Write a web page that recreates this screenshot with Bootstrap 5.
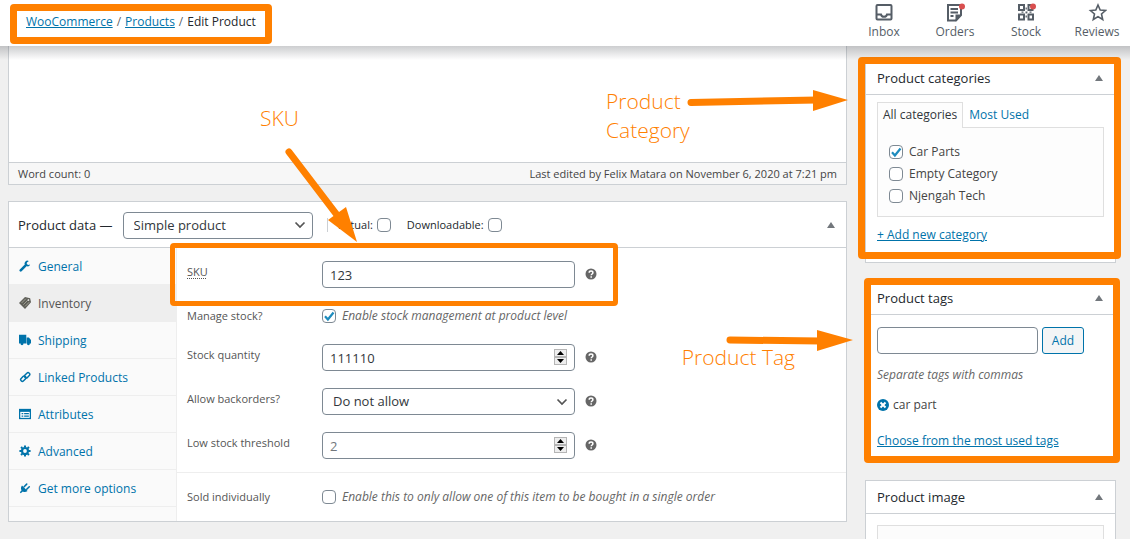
<!DOCTYPE html>
<html lang="en">
<head>
<meta charset="utf-8">
<meta name="viewport" content="width=device-width, initial-scale=1">
<title>Edit Product</title>
<link href="https://cdn.jsdelivr.net/npm/bootstrap@5.3.0/dist/css/bootstrap.min.css" rel="stylesheet">
<style>
:root { --wp-blue: #0073aa; --line: #ccd0d4; --field: #7e8993; --mark: #ff8000; }
body { font: 400 12px/18px "Open Sans", "Noto Sans", sans-serif; color: #444; background: #f0f0f0; }
a { color: var(--wp-blue); }
button { font: inherit; }
.topbar { height: 46px; z-index: 5; }
.topbar::after { content: ""; position: absolute; left: 0; right: 0; top: 100%; height: 14px; background: linear-gradient(rgba(60,64,72,.26), rgba(60,64,72,0)); pointer-events: none; }
.crumbs { padding: 10px 16px 15px; left: 10px; top: 4px; }
.crumbs .breadcrumb { --bs-breadcrumb-item-padding-x: 4px; --bs-breadcrumb-margin-bottom: 0; --bs-breadcrumb-font-size: 12px; line-height: 15px; }
.crumbs .active { color: #23282d; }
.activity { gap: 15px; padding-right: 5px; }
.activity button { width: 56px; color: #555d66; line-height: 16px; padding: 0; border: 0; background: none; display: flex; flex-direction: column; align-items: center; padding-top: 2px; }
.page { gap: 18px; padding: 0 14px 0 8px; }
.panel { background: #fff; border: 1px solid var(--line); }
.panel-title { font-size: 13px; line-height: 20px; font-weight: 500; color: #23282d; margin: 0; }
.caret { border: 4px solid transparent; border-top: 0; border-bottom: 6px solid #72777c; padding: 0; background: none; }
.editor-body { height: 116px; border: 0; resize: none; display: block; outline: 0; }
.status { height: 22px; background: #f7f7f7; border-top: 1px solid var(--line); padding: 0 9px; font-size: 11px; }
.data-head { height: 46px; padding: 0 11px 0 9px; border-bottom: 1px solid var(--line); color: #23282d; }
.field, .pick { height: 27px; width: 253px; border: 1px solid var(--field); border-radius: 4px; padding: 0 7px; font-size: 13px; line-height: 25px; color: #32373c; background-color: #fff; }
.field::placeholder { color: #72777c; opacity: 1; }
.field::-webkit-inner-spin-button { -webkit-appearance: none; }
.pick { appearance: none; padding: 0 24px 0 10px; background: #fff url("data:image/svg+xml,%3Csvg xmlns='http://www.w3.org/2000/svg' viewBox='0 0 12 8'%3E%3Cpath d='M1.5 1.5 6 6l4.500-4.500' fill='none' stroke='%23555' stroke-width='1.700'/%3E%3C/svg%3E") no-repeat right 6px center / 12px 8px; }
.type-pick { width: 190px; margin: 1px 14px 0 10px; }
.form-check-input { width: 14px; height: 14px; margin: 0; border: 1px solid var(--field); flex: none; }
.form-check-input[type=checkbox] { border-radius: 4px; }
.form-check-input:checked { background-color: #fff; border-color: var(--field); background-size: 12px 12px; background-image: url("data:image/svg+xml,%3Csvg xmlns='http://www.w3.org/2000/svg' viewBox='0 0 12 12'%3E%3Cpath d='m2 6.200 2.900 3.300L10.500 2.500' fill='none' stroke='%231e8cbe' stroke-width='2.200'/%3E%3C/svg%3E"); }
.type-opts { border-left: 1px solid var(--line); line-height: 14px; padding-left: 9px; font-size: 11px; }
.tabs { width: 168px; background: #fafafa; border-right: 1px solid #eee; padding-bottom: 14px; }
.tabs a { height: 37px; padding: 2px 10px 0; gap: 7px; border-bottom: 1px solid #eee; text-decoration: none; }
.tabs a.active { background: #eee; color: #555; }
.tabs svg { width: 12px; height: 12px; margin-bottom: 3px; }
.fields { display: flex; flex-direction: column; gap: 17px; padding: 13px 10px; }
.line { display: flex; align-items: center; min-height: 22px; font-size: 11px; }
.line > label:first-child { width: 135px; flex: none; padding-bottom: 5px; color: #555; }
.line > .cap { width: 135px; flex: none; color: #555; }
.line em, .hint { color: #666; font-size: 12px; font-style: italic; }
abbr { text-underline-offset: 2px; }
.spin { right: 8px; top: 5px; width: 13px; }
.spin button { height: 8px; width: 13px; padding: 0; border: 1px solid #b5b5b5; background: #eee; display: flex; align-items: center; justify-content: center; }
.help { margin-left: 10px; width: 12px; height: 12px; margin-bottom: 2px; }
.sold { border-top: 1px solid #eee; padding: 13px 10px 12px; }
.side { width: 251px; padding-top: 15px; }
.side .panel-head { height: 33px; padding: 0 12px 0 11px; border-bottom: 1px solid var(--line); }
.side .panel + .panel { margin-top: 18px; }
.cat-body { padding: 7px 11px 18px; }
.cat-tabs a { padding: 3px 5px 4px; text-decoration: none; border: 1px solid transparent; border-bottom: 0; margin-bottom: -1px; height: 26px; }
.cat-tabs a.active { border-color: #dfdfdf; background: #fdfdfd; color: #32373c; }
.cat-list { border: 1px solid #dfdfdf; background: #fdfdfd; padding: 13px 11px 9px; }
.cat-list label, .chk { display: flex; align-items: center; gap: 6px; height: 22px; }
.add-cat { margin-top: 9px; }
.tag-body { padding: 12px 11px 11px; }
.tag-input { width: 161px; }
.tag-hint { margin: 12px 0; }
.tag-row { margin-bottom: 18px; }
.btn-add { height: 27px; width: 42px; padding: 0; color: var(--wp-blue); border: 1px solid var(--wp-blue); border-radius: 3px; background: #f3f5f6; }
.image-body { padding: 11px; }
.image-box { height: 200px; border: 1px solid #dfdfdf; background: #fcfcfc; }
/* callouts drawn over the page */
.frame { position: absolute; border: 7px solid var(--mark); border-radius: 4px; pointer-events: none; z-index: 3; }
.frame-cat { left: -8px; right: -6px; top: -5px; bottom: 3px; }
.frame-tag { left: -2px; right: -5px; top: -4px; bottom: -2px; }
.frame-sku { left: 161px; top: 41px; width: 448px; height: 63px; border-width: 5px; }
.note { position: absolute; color: var(--mark); font: 300 21px/29px "Open Sans", "Noto Sans", sans-serif; z-index: 3; }
.note-sku { left: 252px; top: 58px; }
.note-cat { right: 147px; top: 41px; width: 94px; }
.note-tag { right: 52px; top: 297px; }
.arrow { position: absolute; z-index: 4; pointer-events: none; overflow: visible; }
.arrow-sku { left: 280px; top: 104px; }
.arrow-cat { right: 0; top: 43px; }
.arrow-tag { right: -6px; top: 283px; }
</style>
</head>
<body class="vh-100 overflow-hidden d-flex flex-column">
<svg class="d-none"><defs>
 <symbol id="q" viewBox="0 0 12 12"><circle cx="6" cy="6" r="5.500" fill="#666"/><path d="M4.200 4.700c0-2.200 3.700-2.200 3.700 0C7.900 6 6.200 6 6.200 7.300M6.200 8.300v1.500" fill="none" stroke="#fff" stroke-width="1.500"/></symbol>
</defs></svg>

<header class="topbar bg-white position-relative d-flex justify-content-between flex-shrink-0">
 <nav class="crumbs position-relative align-self-start" aria-label="breadcrumb">
  <ol class="breadcrumb flex-nowrap">
   <li class="breadcrumb-item"><a href="#">WooCommerce</a></li>
   <li class="breadcrumb-item"><a href="#">Products</a></li>
   <li class="breadcrumb-item active" aria-current="page">Edit Product</li>
  </ol>
  <span class="frame top-0 start-0 end-0 bottom-0"></span>
 </nav>
 <div class="activity d-flex">
  <button type="button"><svg width="20" height="22" viewBox="0 0 20 22" fill="none" stroke="#555d66" stroke-width="2"><rect x="2.500" y="3" width="15" height="14.500" rx="1"/><path d="M3 12.500h4c.5 3 5.500 3 6 0h4"/></svg>Inbox</button>
  <button type="button"><svg width="20" height="22" viewBox="0 0 20 22" fill="none" stroke="#555d66" stroke-width="2"><path d="M3 3h13v10l-5 5.500H3zM5.500 7H13M5.500 10.500H13M5.500 14h3"/><path d="M10.500 12.500H17L10.500 19.500z" fill="#555d66" stroke="none"/><circle cx="17" cy="4.500" r="3" fill="#d94f4f" stroke="none"/></svg>Orders</button>
  <button type="button"><svg width="20" height="22" viewBox="0 0 20 22" fill="none" stroke="#555d66" stroke-width="2"><path d="M3 3h5v5H3zM12.500 3h4v5h-4zM3 12.500h5v5H3zM12.500 12.500h4.500v5h-4.500z"/><path d="M10.200 5.500v10M5.500 10.200h10" stroke-width="1.300" stroke-dasharray="2 2"/><circle cx="17" cy="4.500" r="3" fill="#d94f4f" stroke="none"/></svg>Stock</button>
  <button type="button"><svg width="20" height="22" viewBox="0 0 20 22" fill="none" stroke="#555d66" stroke-width="1.600"><path d="m11 3 2.200 5 5.300.5-4 3.500 1.200 5.500L11 14.600l-4.700 2.900L7.500 12l-4-3.500 5.300-.5z"/></svg>Reviews</button>
 </div>
</header>

<div class="page d-flex align-items-start">
 <main class="flex-grow-1 position-relative">
  <section class="panel border-top-0">
   <textarea class="editor-body w-100" aria-label="Description"></textarea>
   <div class="status d-flex justify-content-between align-items-center"><span>Word count: 0</span><span>Last edited by Felix Matara on November 6, 2020 at 7:21 pm</span></div>
  </section>

  <section class="panel position-relative mt-3">
   <div class="data-head d-flex align-items-center">
    <h2 class="panel-title"><label for="ptype">Product data —</label></h2>
    <select class="pick type-pick" id="ptype"><option>Simple product</option></select>
    <div class="type-opts d-flex align-items-center">
     <label for="virt">Virtual:</label><input class="form-check-input ms-1 me-3" type="checkbox" id="virt">
     <label for="down">Downloadable:</label><input class="form-check-input ms-1" type="checkbox" id="down">
    </div>
    <button type="button" class="caret ms-auto" aria-label="Toggle panel"></button>
   </div>
   <div class="d-flex">
    <nav class="tabs d-flex flex-column flex-shrink-0">
     <a href="#" class="d-flex align-items-center"><svg viewBox="0 0 14 14"><path d="M2 12 7.500 6.500" stroke="#0073aa" stroke-width="3" stroke-linecap="round"/><path d="M11.500 1.200A3.300 3.300 0 1 0 13 5.200L10.500 5.800 9 4.500 9.300 2.800z" fill="#0073aa"/></svg>General</a>
     <a href="#" class="d-flex align-items-center active"><svg viewBox="0 0 14 14"><path d="M0 7 7 0l6 1.500L14 6l-7 8z" fill="#5f5f58"/><path d="m3 7 5-5M5 9l5-5M7 11l5-5" stroke="#a9a99c"/><circle cx="11" cy="3.500" r="1" fill="#fff"/></svg>Inventory</a>
     <a href="#" class="d-flex align-items-center"><svg viewBox="0 0 14 14" fill="#0073aa"><path d="M0 1h8.500v10H0zM9 4h2.500L14 7v4H9z"/><circle cx="3.500" cy="11.500" r="1.700"/><circle cx="11" cy="11.500" r="1.700"/></svg>Shipping</a>
     <a href="#" class="d-flex align-items-center"><svg viewBox="0 0 14 14" fill="none" stroke="#0073aa" stroke-width="1.700"><rect x="6" y="3" width="7" height="4" rx="2" transform="rotate(-45 9.500 5)"/><rect x="1.500" y="7" width="7" height="4" rx="2" transform="rotate(-45 5 9)"/></svg>Linked Products</a>
     <a href="#" class="d-flex align-items-center"><svg viewBox="0 0 14 14"><path d="M0 1h14v12H0z" fill="#0073aa"/><path d="M1.500 4.500h11v7h-11z" fill="#fff"/><path d="M3 6.500h2M3 9.500h2M6 6.500h5.500M6 9.500h5.500" stroke="#0073aa" stroke-width="1.500"/></svg>Attributes</a>
     <a href="#" class="d-flex align-items-center"><svg viewBox="0 0 14 14" fill="none" stroke="#0073aa"><circle cx="7" cy="7" r="3.500" stroke-width="2.600"/><path d="M7 .5v2M7 11.500v2M.5 7h2M11.500 7h2M2.400 2.400l1.400 1.400M10.200 10.200l1.400 1.400M2.400 11.600l1.400-1.400M10.200 3.800l1.400-1.400" stroke-width="2.400"/></svg>Advanced</a>
     <a href="#" class="d-flex align-items-center"><svg viewBox="0 0 14 14"><path d="M3.500 4 10 10.500c-2 1.500-4 1.500-5.500.5L2 13l-1-1 2-2.500C2 8 2 6 3.500 4z" fill="#0073aa"/><path d="m6 5.500 3-3M9 8.500l3-3" stroke="#0073aa" stroke-width="1.800" stroke-linecap="round"/></svg>Get more options</a>
    </nav>
    <div class="flex-grow-1">
     <div class="fields">
      <div class="line"><label for="sku"><abbr title="Stock Keeping Unit">SKU</abbr></label><input class="field" id="sku" value="123"><svg class="help"><use href="#q"/></svg></div>
      <div class="line"><span class="cap">Manage stock?</span><label class="chk"><input class="form-check-input" type="checkbox" checked><em>Enable stock management at product level</em></label></div>
      <div class="line"><label for="qty">Stock quantity</label><div class="position-relative"><input class="field" id="qty" type="number" value="111110"><div class="spin position-absolute"><button type="button" aria-label="Increase"><svg width="7" height="4"><path d="M0 4 3.500 0 7 4z"/></svg></button><button type="button" aria-label="Decrease"><svg width="7" height="4"><path d="M0 0h7L3.500 4z"/></svg></button></div></div><svg class="help"><use href="#q"/></svg></div>
      <div class="line"><label for="back">Allow backorders?</label><select class="pick" id="back"><option>Do not allow</option></select><svg class="help"><use href="#q"/></svg></div>
      <div class="line"><label for="low">Low stock threshold</label><div class="position-relative"><input class="field" id="low" type="number" placeholder="2"><div class="spin position-absolute"><button type="button" aria-label="Increase"><svg width="7" height="4"><path d="M0 4 3.500 0 7 4z"/></svg></button><button type="button" aria-label="Decrease"><svg width="7" height="4"><path d="M0 0h7L3.500 4z"/></svg></button></div></div><svg class="help"><use href="#q"/></svg></div>
     </div>
     <div class="sold"><div class="line"><span class="cap">Sold individually</span><label class="chk"><input class="form-check-input" type="checkbox"><em>Enable this to only allow one of this item to be bought in a single order</em></label></div></div>
    </div>
   </div>
   <span class="frame frame-sku"></span>
  </section>

  <span class="note note-sku">SKU</span>
  <svg class="arrow arrow-sku" width="70" height="92"><path d="M1 2 49 65" stroke="#ff8000" stroke-width="7" stroke-linecap="round"/><path d="M40 70 58 57 69 92z" fill="#ff8000"/></svg>
  <span class="note note-cat">Product Category</span>
  <svg class="arrow arrow-cat" width="160" height="22"><path d="M4 13.500 130 11" stroke="#ff8000" stroke-width="7" stroke-linecap="round"/><path d="M126 1v21l35-11z" fill="#ff8000"/></svg>
  <span class="note note-tag text-nowrap">Product Tag</span>
  <svg class="arrow arrow-tag" width="128" height="23"><path d="M5 11 95 12" stroke="#ff8000" stroke-width="7" stroke-linecap="round"/><path d="M92 1v21l36-11z" fill="#ff8000"/></svg>
 </main>

 <aside class="side flex-shrink-0">
  <section class="panel position-relative">
   <div class="panel-head d-flex justify-content-between align-items-center"><h2 class="panel-title">Product categories</h2><button type="button" class="caret" aria-label="Toggle panel"></button></div>
   <div class="cat-body">
    <div class="cat-tabs d-flex"><a href="#" class="active">All categories</a><a href="#">Most Used</a></div>
    <div class="cat-list">
     <label><input class="form-check-input" type="checkbox" checked>Car Parts</label>
     <label><input class="form-check-input" type="checkbox">Empty Category</label>
     <label><input class="form-check-input" type="checkbox">Njengah Tech</label>
    </div>
    <a href="#" class="d-inline-block add-cat">+ Add new category</a>
   </div>
   <span class="frame frame-cat"></span>
  </section>
  <section class="panel position-relative">
   <div class="panel-head d-flex justify-content-between align-items-center"><h2 class="panel-title"><label for="tag">Product tags</label></h2><button type="button" class="caret" aria-label="Toggle panel"></button></div>
   <div class="tag-body">
    <div class="d-flex gap-1"><input class="field tag-input" id="tag"><button type="button" class="btn-add">Add</button></div>
    <p class="hint tag-hint">Separate tags with commas</p>
    <div class="d-flex align-items-center gap-1 tag-row"><button type="button" class="p-0 border-0 bg-transparent d-flex" aria-label="Remove car part"><svg width="12" height="12"><circle cx="6" cy="6" r="6" fill="#0073aa"/><path d="m3.500 3.500 5 5m0-5-5 5" stroke="#fff" stroke-width="2"/></svg></button>car part</div>
    <a href="#" class="d-inline-block">Choose from the most used tags</a>
   </div>
   <span class="frame frame-tag"></span>
  </section>
  <section class="panel">
   <div class="panel-head d-flex justify-content-between align-items-center"><h2 class="panel-title">Product image</h2><button type="button" class="caret" aria-label="Toggle panel"></button></div>
   <div class="image-body"><div class="image-box"></div></div>
  </section>
 </aside>
</div>
</body>
</html>
